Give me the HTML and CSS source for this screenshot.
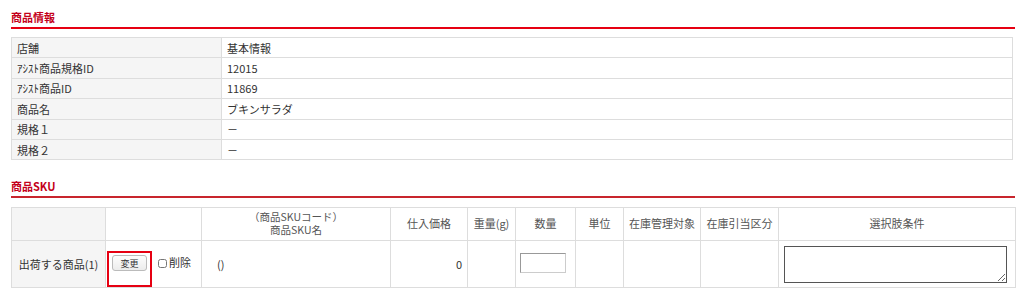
FILE: index.html
```html
<!DOCTYPE html>
<html lang="ja">
  <head>
    <meta charset="UTF-8" />
    <title>商品情報</title>
    <link rel="stylesheet" href="styles.css">
  </head>
  <body>
    <div class="page">
      <h2 class="heading">商品情報</h2>
      <table class="info">
        <tr><th>店舗</th><td>基本情報</td></tr>
        <tr><th>ｱｼｽﾄ商品規格ID</th><td>12015</td></tr>
        <tr><th>ｱｼｽﾄ商品ID</th><td>11869</td></tr>
        <tr><th>商品名</th><td>ブキンサラダ</td></tr>
        <tr><th>規格１</th><td>－</td></tr>
        <tr><th>規格２</th><td>－</td></tr>
      </table>

      <h2 class="heading heading2">商品SKU</h2>
      <table class="sku">
        <colgroup>
          <col style="width:94px"><col style="width:96px"><col style="width:189px">
          <col style="width:77px"><col style="width:48px"><col style="width:60px">
          <col style="width:48px"><col style="width:77px"><col style="width:78px">
          <col style="width:237px">
        </colgroup>
        <tr class="head">
          <th></th>
          <th></th>
          <th class="two">（商品SKUコード）<br>商品SKU名</th>
          <th>仕入価格</th>
          <th>重量(g)</th>
          <th>数量</th>
          <th>単位</th>
          <th>在庫管理対象</th>
          <th>在庫引当区分</th>
          <th>選択肢条件</th>
        </tr>
        <tr class="row">
          <th>出荷する商品(1)</th>
          <td class="ops">
            <div class="ops-inner">
              <span class="mark"><button class="btn">変更</button></span>
              <label class="del"><input type="checkbox">削除</label>
            </div>
          </td>
          <td class="name">()</td>
          <td class="num">0</td>
          <td></td>
          <td class="center"><input class="qty" type="text"></td>
          <td></td>
          <td></td>
          <td></td>
          <td class="center"><textarea class="cond"></textarea></td>
        </tr>
      </table>
    </div>
  </body>
</html>
```

FILE: styles.css
```css
* {
  margin: 0;
  padding: 0;
  box-sizing: border-box;
}
body {
  font-family: "Noto Sans CJK JP", "DejaVu Sans", sans-serif;
  font-size: 11px;
  color: #333;
  background: #fff;
}
.page {
  padding: 10px 9px 0 11px;
}
.heading {
  font-size: 11px;
  font-weight: bold;
  color: #c4001a;
  line-height: 14px;
  padding-bottom: 3px;
  border-bottom: 2px solid #e60012;
}
.heading2 {
  margin-top: 19px;
  border-bottom-color: #c8252d;
}
table {
  width: 100%;
  border-collapse: collapse;
}
.info {
  margin-top: 8px;
  width: 1002px;
}
.info th,
.info td {
  height: 20.4px;
  border: 1px solid #ddd;
  font-weight: normal;
  text-align: left;
  padding: 0 5px;
  line-height: 14px;
}
.info th {
  width: 210px;
  background: #f5f5f5;
}
.sku {
  margin-top: 9px;
  table-layout: fixed;
}
.sku th,
.sku td {
  border: 1px solid #ddd;
  font-weight: normal;
  line-height: 12px;
}
.sku th {
  background: #f5f5f5;
  text-align: center;
}
.sku .head th {
  height: 33px;
  color: #555;
  background: #f5f5f5;
  padding-bottom: 2px;
}
.sku .head th + th {
  background: #fff;
}
.sku .head th.two {
  font-size: 10.5px;
  line-height: 13px;
  padding-bottom: 3px;
}
.sku .row th,
.sku .row td {
  height: 47px;
}
.sku td {
  padding: 0 8px;
  text-align: left;
}
.sku td.name {
  padding-left: 15px;
}
.sku td.num {
  text-align: right;
  padding-right: 5px;
}
.sku td.center {
  text-align: center;
  padding: 0 4px;
}
.sku td.ops {
  padding: 10px 0 0 1px;
  vertical-align: top;
  white-space: nowrap;
}
.ops-inner {
  display: flex;
  align-items: flex-start;
}
.mark {
  display: block;
  border: 2px solid #e60012;
  padding: 2px 3px 14px 3px;
}
.btn {
  display: block;
  font-family: "Noto Sans CJK JP", sans-serif;
  font-size: 9px;
  color: #333;
  width: 35px;
  height: 16px;
  border: 1px solid #bbb;
  border-radius: 3px;
  background: linear-gradient(#fdfdfd, #ececec);
}
.del {
  display: block;
  margin: 5px 0 0 6px;
  line-height: 12px;
}
.del input {
  width: 9px;
  height: 9px;
  margin-right: 2px;
  vertical-align: -1px;
}
.qty {
  display: block;
  margin: 0 0 2px 0;
  width: 46px;
  height: 20px;
  border: 1px solid #ccc;
  border-top-color: #999;
  border-left-color: #999;
}
.cond {
  display: block;
  width: 223px;
  height: 37px;
  margin: 0 0 0 1px;
  border: 1px solid #555;
  resize: both;
}
```
